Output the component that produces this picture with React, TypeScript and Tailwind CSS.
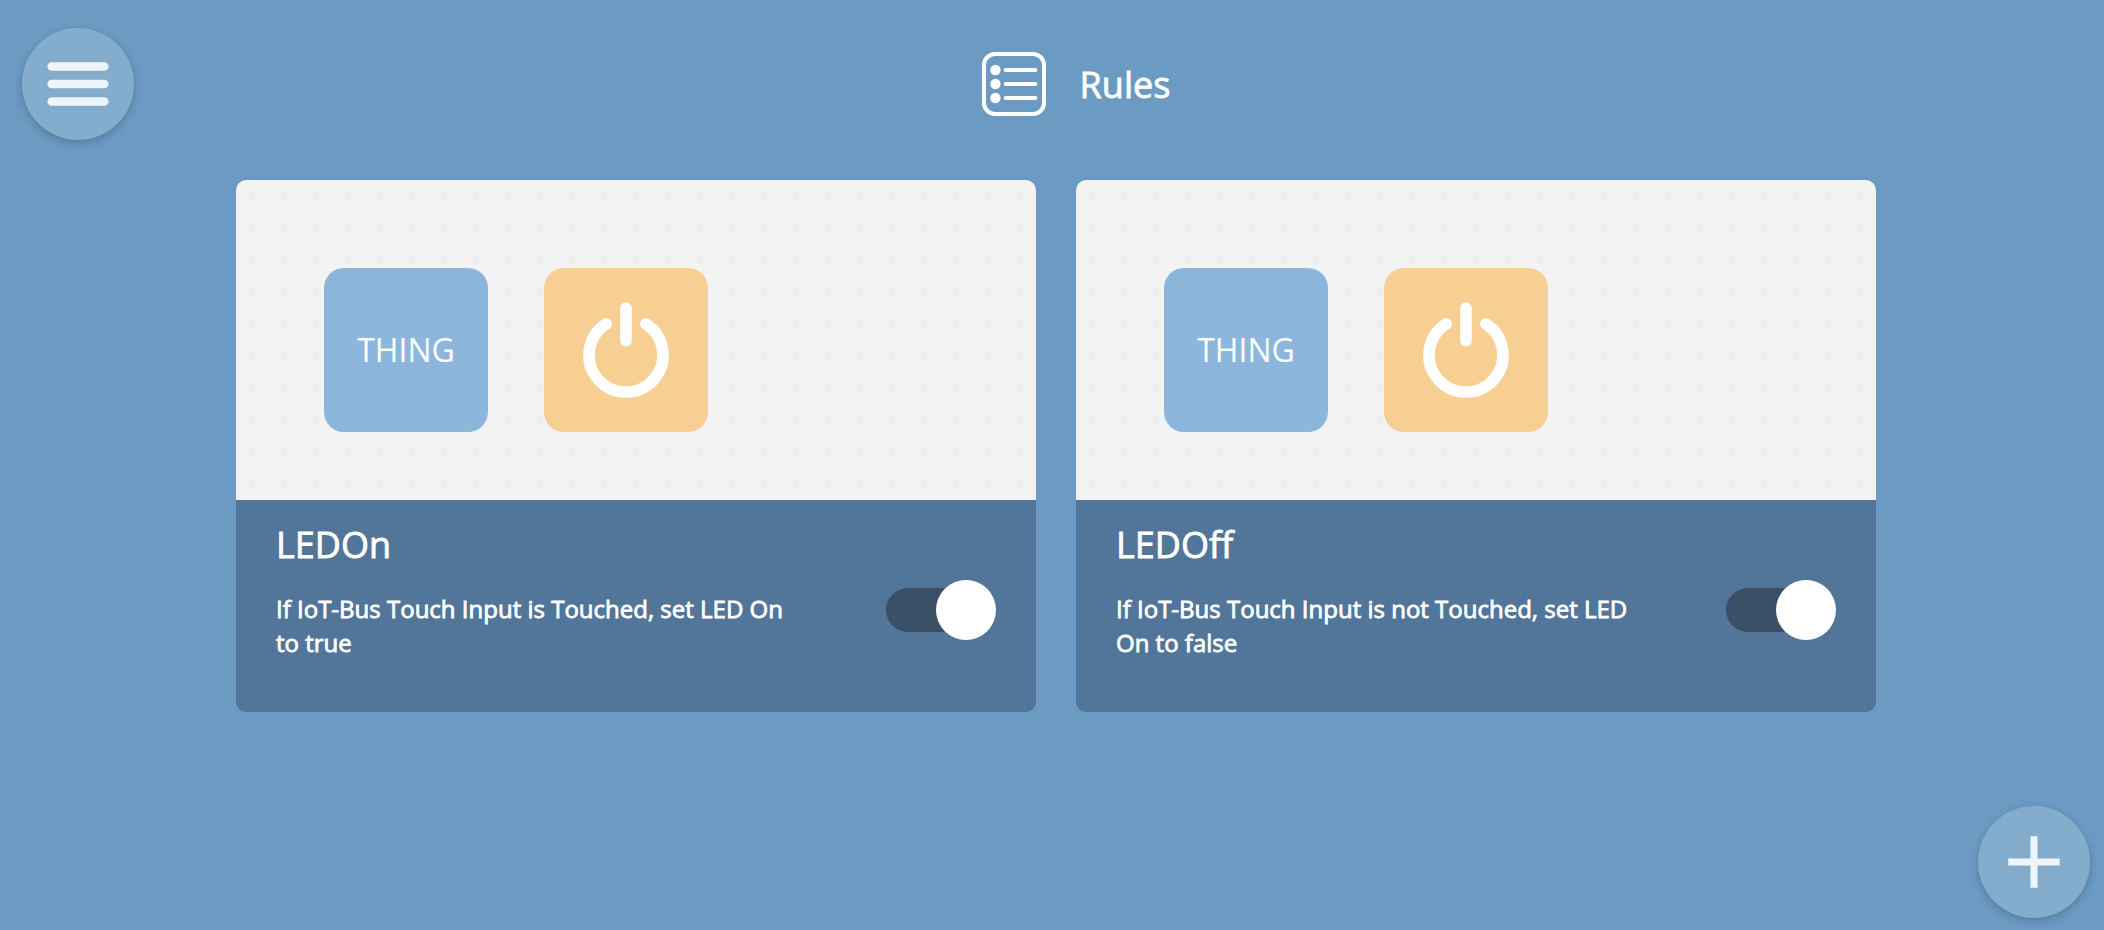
import { useState } from "react";

type Rule = { id: string; name: string; description: string };

const RULES: Rule[] = [
  {
    id: "led-on",
    name: "LEDOn",
    description: "If IoT-Bus Touch Input is Touched, set LED On to true",
  },
  {
    id: "led-off",
    name: "LEDOff",
    description: "If IoT-Bus Touch Input is not Touched, set LED On to false",
  },
];

function ListIcon() {
  return (
    <svg className="size-16 shrink-0" viewBox="0 0 64 64" fill="none" aria-hidden="true">
      <rect x="2" y="2" width="60" height="60" rx="11" stroke="white" strokeWidth="4" />
      {[18, 32, 46].map((y) => (
        <g key={y}>
          <circle cx="13.4" cy={y} r="5.2" fill="white" />
          <path d={`M23.6 ${y}H53.4`} stroke="white" strokeWidth="4" strokeLinecap="round" />
        </g>
      ))}
    </svg>
  );
}

function PowerIcon() {
  return (
    <svg
      className="size-full"
      viewBox="0 0 164 164"
      fill="none"
      stroke="white"
      strokeWidth="11.6"
      strokeLinecap="round"
      aria-hidden="true"
    >
      <path d="M82 40V72.6" />
      <path d="M101.8 55.8A37 37 0 1 1 62.2 55.8" />
    </svg>
  );
}

function Switch({ id, label }: { id: string; label: string }) {
  const [on, setOn] = useState(true);
  return (
    <label htmlFor={id} className="relative flex h-15 w-[110px] shrink-0 cursor-pointer items-center">
      <input
        id={id}
        type="checkbox"
        role="switch"
        aria-label={label}
        checked={on}
        onChange={(e) => setOn(e.target.checked)}
        className="peer absolute inset-0 z-10 cursor-pointer opacity-0"
      />
      <span className="h-11 w-[100px] rounded-full bg-[#3a5067]" />
      <span className="absolute left-0 size-15 rounded-full bg-white transition-transform peer-checked:translate-x-[50px]" />
    </label>
  );
}

function RuleCard({ rule }: { rule: Rule }) {
  return (
    <article className="overflow-hidden rounded-[10px] bg-[#527699]">
      <div className="flex h-80 gap-14 bg-[#f3f3f3] bg-[radial-gradient(circle_at_center,#eeeeee_4px,transparent_4px)] bg-[length:32px_32px] pt-22 pl-22">
        <div className="flex size-41 shrink-0 items-center justify-center rounded-[20px] bg-[#8db6dc] text-[32px] text-white">
          THING
        </div>
        <div className="size-41 shrink-0 rounded-[20px] bg-[#f8cf93]">
          <PowerIcon />
        </div>
      </div>
      <div className="px-10 pt-5 pb-13">
        <h2 className="text-[36px] leading-[50px] [-webkit-text-stroke:0.8px_white]">{rule.name}</h2>
        <div className="mt-2.5 flex items-start gap-20">
          <p className="flex-1 pt-3 text-[24px] leading-[34px] [-webkit-text-stroke:0.8px_white]">
            {rule.description}
          </p>
          <Switch id={rule.id} label={`Enable ${rule.name}`} />
        </div>
      </div>
    </article>
  );
}

export default function App() {
  return (
    <div className="min-h-screen bg-[#6b9ac3] font-['Open_Sans',sans-serif] text-white">
      <button
        type="button"
        aria-label="Open menu"
        className="fixed top-7 left-[22px] flex size-28 items-center justify-center rounded-full bg-[#84accd] shadow-[0_3px_8px_rgba(0,0,0,0.2)]"
      >
        <svg className="size-16" viewBox="0 0 64 64" stroke="#f0f5fa" strokeWidth="8.6" strokeLinecap="round" aria-hidden="true">
          <path d="M5.7 14.5H58.3M5.7 32H58.3M5.7 49.5H58.3" />
        </svg>
      </button>

      <header className="flex h-42 items-center justify-center gap-[34px] pl-12">
        <ListIcon />
        <h1 className="pt-0.5 text-[36px] leading-[48px] [-webkit-text-stroke:0.8px_white]">Rules</h1>
      </header>

      <main className="mx-auto grid max-w-[1648px] grid-cols-1 gap-10 pt-3 pl-2 lg:grid-cols-2">
        {RULES.map((rule) => (
          <RuleCard key={rule.id} rule={rule} />
        ))}
      </main>

      <button
        type="button"
        aria-label="Add rule"
        className="fixed right-3.5 bottom-3 flex size-28 items-center justify-center rounded-full bg-[#84accd] shadow-[0_3px_8px_rgba(0,0,0,0.2)]"
      >
        <svg className="size-14" viewBox="0 0 56 56" stroke="#f0f5fa" strokeWidth="7" aria-hidden="true">
          <path d="M28 2.3V53.7M2.3 28H53.7" />
        </svg>
      </button>
    </div>
  );
}
